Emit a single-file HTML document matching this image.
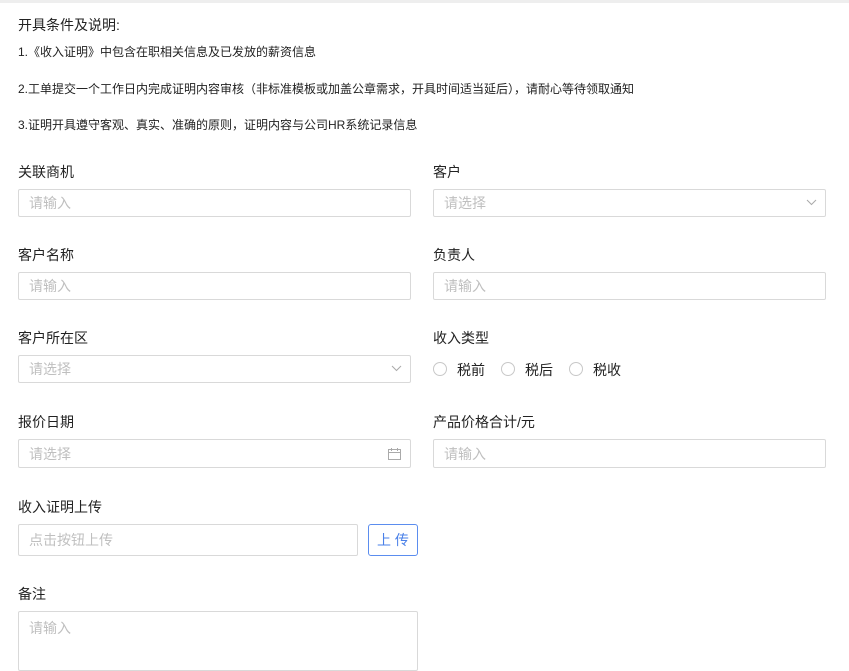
<!DOCTYPE html><html><head><meta charset="utf-8"><style>
body{margin:0;width:849px;height:661px;overflow:hidden;background:#fff;font-family:"Liberation Sans","Noto Sans CJK SC",sans-serif;color:#222;position:relative}
.a{position:absolute;white-space:nowrap}
.t{font-size:14px}
.s{font-size:12px}
.in{position:absolute;box-sizing:border-box;border:1px solid #d9d9d9;border-radius:2px;font-size:14px;color:#bfbfbf;padding-left:10px;display:flex;align-items:center}
.r{position:absolute;width:14px;height:14px;border:1px solid #c8c8c8;border-radius:50%;box-sizing:border-box}
</style></head><body>
<div class="a" style="left:0;top:0;width:849px;height:3px;background:#eee"></div>
<div class="a t" style="left:18px;top:15px">开具条件及说明:</div>
<div class="a s" style="left:18px;top:43px">1.《收入证明》中包含在职相关信息及已发放的薪资信息</div>
<div class="a s" style="left:18px;top:80px">2.工单提交一个工作日内完成证明内容审核（非标准模板或加盖公章需求，开具时间适当延后），请耐心等待领取通知</div>
<div class="a s" style="left:18px;top:116px">3.证明开具遵守客观、真实、准确的原则，证明内容与公司HR系统记录信息</div>

<div class="a t" style="left:18px;top:162px">关联商机</div>
<div class="in" style="left:18px;top:189px;width:393px;height:28px">请输入</div>
<div class="a t" style="left:433px;top:162px">客户</div>
<div class="in" style="left:433px;top:189px;width:393px;height:28px">请选择<svg style="position:absolute;right:8px;top:9px" width="11" height="7"><path d="M1 1l4.5 4.5L10 1" stroke="#aaa" fill="none"/></svg></div>

<div class="a t" style="left:18px;top:245px">客户名称</div>
<div class="in" style="left:18px;top:272px;width:393px;height:28px">请输入</div>
<div class="a t" style="left:433px;top:245px">负责人</div>
<div class="in" style="left:433px;top:272px;width:393px;height:28px">请输入</div>

<div class="a t" style="left:18px;top:328px">客户所在区</div>
<div class="in" style="left:18px;top:355px;width:393px;height:28px">请选择<svg style="position:absolute;right:8px;top:9px" width="11" height="7"><path d="M1 1l4.5 4.5L10 1" stroke="#aaa" fill="none"/></svg></div>
<div class="a t" style="left:433px;top:328px">收入类型</div>
<div class="r" style="left:433px;top:362px"></div><div class="a t" style="left:457px;top:360px">税前</div>
<div class="r" style="left:501px;top:362px"></div><div class="a t" style="left:525px;top:360px">税后</div>
<div class="r" style="left:569px;top:362px"></div><div class="a t" style="left:593px;top:360px">税收</div>

<div class="a t" style="left:18px;top:412px">报价日期</div>
<div class="in" style="left:18px;top:439px;width:393px;height:29px">请选择<svg style="position:absolute;right:9px;top:8px" width="13" height="12"><rect x="0.5" y="1.5" width="12" height="10" fill="none" stroke="#aaa"/><path d="M0.5 4.5h12M3.5 0v3M9.5 0v3" stroke="#aaa"/></svg></div>
<div class="a t" style="left:433px;top:412px">产品价格合计/元</div>
<div class="in" style="left:433px;top:439px;width:393px;height:29px">请输入</div>

<div class="a t" style="left:18px;top:497px">收入证明上传</div>
<div class="in" style="left:18px;top:524px;width:340px;height:32px">点击按钮上传</div>
<div class="in" style="left:368px;top:524px;width:50px;height:32px;border-color:#5b8def;color:#4a80e8;padding:0;justify-content:center;border-radius:3px">上 传</div>

<div class="a t" style="left:18px;top:584px">备注</div>
<div class="in" style="left:18px;top:611px;width:400px;height:60px;align-items:flex-start;padding-top:6px">请输入</div>
</body></html>
